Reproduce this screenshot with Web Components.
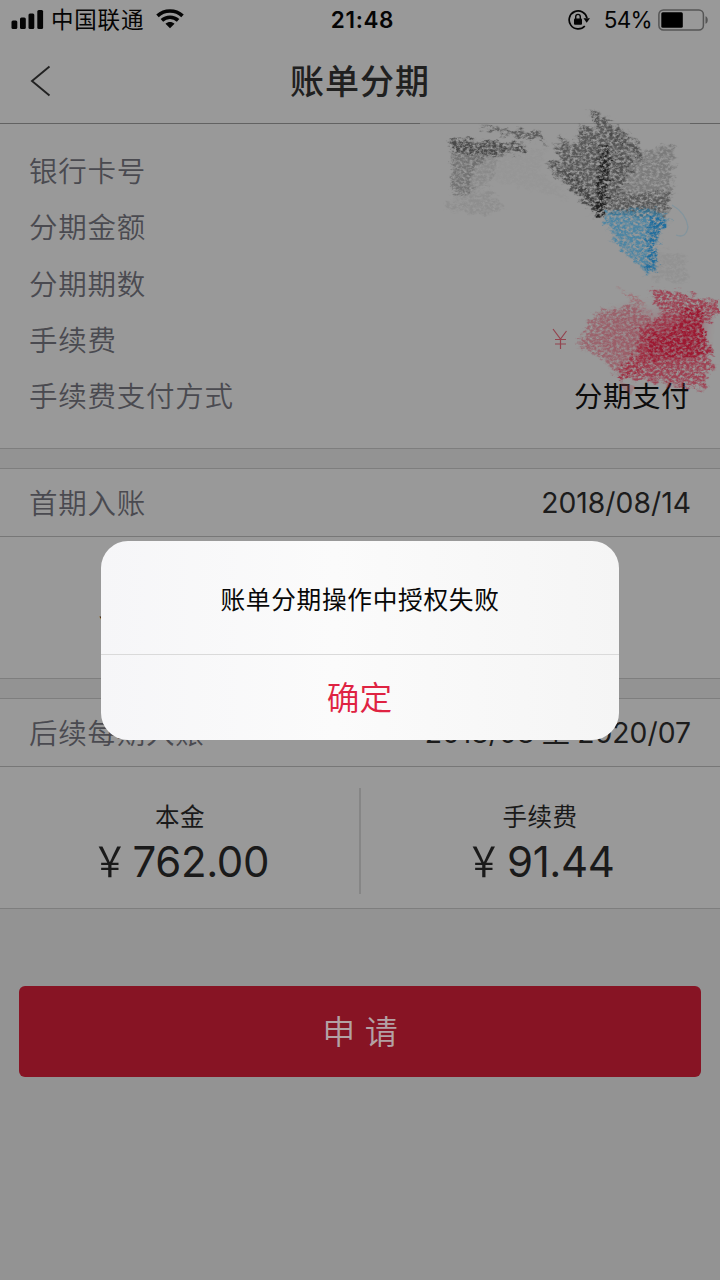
<!DOCTYPE html>
<html lang="zh-CN">
<head>
<meta charset="utf-8">
<title>账单分期</title>
<style>
html,body{margin:0;background:#939393}
body{width:720px;height:1280px;overflow:hidden;font-family:Inter,"Noto Sans CJK SC",sans-serif}
</style>
</head>
<body>
<app-screen>
  <status-bar></status-bar>
  <nav-bar>账单分期</nav-bar>
  <detail-card>
    <info-row label="银行卡号"></info-row>
    <info-row label="分期金额"></info-row>
    <info-row label="分期期数"></info-row>
    <info-row label="手续费"></info-row>
    <info-row label="手续费支付方式">分期支付</info-row>
    <crayon-marks slot="marks"></crayon-marks>
  </detail-card>
  <bill-section label="首期入账" when="2018/08/14">
    <amount-cell partial><span>￥</span></amount-cell>
    <amount-cell></amount-cell>
  </bill-section>
  <bill-section label="后续每期入账" when="2018/08 至 2020/07">
    <amount-cell label="本金"><span>￥</span>762.00</amount-cell>
    <amount-cell label="手续费"><span>￥</span>91.44</amount-cell>
  </bill-section>
  <apply-button>申 请</apply-button>
  <alert-dialog slot="dialog" action="确定">账单分期操作中授权失败</alert-dialog>
</app-screen>
<script>
function define(name, html, setup) {
  const t = document.createElement('template');
  t.innerHTML = html;
  customElements.define(name, class extends HTMLElement {
    constructor() {
      super();
      this.attachShadow({mode: 'open'}).appendChild(t.content.cloneNode(true));
    }
    connectedCallback() { if (setup) setup(this, this.shadowRoot); }
  });
}
const putLabel = (el, root) => {
  root.querySelector('.label').textContent = el.getAttribute('label') || '';
};

define('app-screen', `<style>
:host{display:flex;flex-direction:column;position:relative;width:720px;height:1280px;background:#939393;overflow:hidden}
</style><slot></slot><slot name="dialog"></slot>`);

define('status-bar', `<style>
:host{display:grid;grid-template-columns:1fr auto 1fr;align-items:center;height:40px;background:#999;color:#050505;font-size:22.5px;line-height:40px}
.l{display:flex;align-items:center;padding-left:11px}
.l span{font-size:22.5px;letter-spacing:.8px;margin:0 10px 0 7px}
.time{font-weight:600;font-size:22.5px;letter-spacing:.65px;padding-left:5px}
.r{display:flex;align-items:center;justify-content:flex-end;padding-right:11px}
.r span{margin:0 6px 0 13px;font-size:22.5px;letter-spacing:-.7px}
svg{display:block}
</style>
<div class="l">
<svg width="33" height="20" viewBox="0 0 33 20" fill="#050505"><rect x=".5" y="10.500" width="5.800" height="8.500" rx="1.500"/><rect x="9" y="7.500" width="5.800" height="11.500" rx="1.500"/><rect x="17.500" y="3.500" width="5.800" height="15.500" rx="1.500"/><rect x="26.300" y="0" width="5.800" height="19" rx="1.500"/></svg>
<span>中国联通</span>
<svg style="margin:-2px 0 0 2px" width="28" height="20" viewBox="0 0 28 20"><g fill="none" stroke="#050505" stroke-width="3.700"><path d="M1.500 6.800C8.500.4 19.500.4 26.500 6.800"/><path d="M5.900 11.400c4.600-4.200 11.600-4.200 16.200 0"/></g><path d="M9.500 14.700c2.600-2.300 6.400-2.300 9 0L14 19.200z" fill="#050505"/></svg>
</div>
<div class="time">21:48</div>
<div class="r">
<svg width="23" height="20" viewBox="0 0 23 20"><path d="M16.800 16A9 9 0 1 1 19 8.200" fill="none" stroke="#050505" stroke-width="1.700"/><path d="M15.500 8.200h6.500l-3.300 4.600z" fill="#050505"/><rect x="6" y="8.500" width="8" height="6.200" rx="1" fill="#050505"/><path d="M7.700 9V6.700a2.300 2.300 0 0 1 4.600 0V9" fill="none" stroke="#050505" stroke-width="1.400"/></svg>
<span>54%</span>
<svg width="51" height="22" viewBox="0 0 51 22"><rect x=".9" y=".9" width="44.500" height="20.200" rx="4.500" fill="none" stroke="#555" stroke-width="1.500"/><rect x="3.300" y="3.300" width="21.500" height="15.400" rx="1.500" fill="#000"/><path d="M47.500 7.200c3 1 3 6.600 0 7.600z" fill="#555"/></svg>
</div>`);

define('nav-bar', `<style>
:host{display:grid;grid-template-columns:80px 1fr 80px;align-items:center;height:83px;background:#999;border-bottom:1px solid #626262;color:#202020}
h1{margin:0;text-align:center;font-size:34px;font-weight:500;letter-spacing:1px;line-height:50px}
svg{display:block;margin:-1px 0 0 30px}
</style><svg width="22" height="32" viewBox="0 0 22 32"><path d="M19.500 1.500L2 16l17.500 14.500" fill="none" stroke="#222" stroke-width="1.900"/></svg><h1><slot></slot></h1>`);

define('detail-card', `<style>
:host{display:block;position:relative;box-sizing:border-box;height:325px;padding-top:17.300px;background:#999;border-bottom:1px solid #7e7e7e}
</style><slot></slot><slot name="marks"></slot>`);

define('info-row', `<style>
:host{display:flex;justify-content:space-between;align-items:center;height:56.300px;padding:0 30px 0 29px;font-size:28.500px;letter-spacing:.75px;color:#4a4a50}
.label{font-weight:350}
.v{color:#0c0c0c;letter-spacing:.5px}
</style><span class="label"></span><span class="v"><slot></slot></span>`, putLabel);

define('bill-section', `<style>
:host{display:block;margin-top:19px;height:211px;background:#999}
.head{display:flex;justify-content:space-between;align-items:center;height:67px;padding:0 29px;border-top:1px solid #7e7e7e;border-bottom:1px solid #777;font-size:28.500px;color:#4a4a50}
.label{letter-spacing:.75px;font-weight:350;padding-bottom:3px}
.when{color:#1c1c1c;font-size:28.300px;letter-spacing:.02px;word-spacing:-.8px;line-height:40px}
.cells{display:grid;grid-template-columns:1fr 1fr;height:141px;border-bottom:1px solid #7e7e7e;position:relative}
.cells::before{content:"";position:absolute;left:359px;top:21px;width:2px;height:106px;background:#868686}
</style><div class="head"><span class="label"></span><span class="when"></span></div><div class="cells"><slot></slot></div>`,
(el, root) => { putLabel(el, root); root.querySelector('.when').textContent = el.getAttribute('when'); });

define('amount-cell', `<style>
:host{display:flex;flex-direction:column;align-items:center;color:#1a1a1a;padding-top:32px}
.label{height:36px;line-height:36px;font-size:24.500px;font-weight:400;letter-spacing:.5px}
.value{height:52px;line-height:54px;font-size:42px;letter-spacing:-.4px;white-space:nowrap}
::slotted(span){display:inline-block;transform:scaleX(.85);margin:0 2px 0 -2px}
:host([partial]) ::slotted(span){transform:none;margin:0 135px 0 0}
</style><div class="label"></div><div class="value"><slot></slot></div>`, putLabel);

define('apply-button', `<style>
:host{display:block;margin:77px 19px 0;flex:none}
button{display:block;width:682px;height:91px;border:0;border-radius:6px;background:#871424;color:#b3a1a4;font:350 33px Inter,"Noto Sans CJK SC",sans-serif;padding:0 0 3px}
</style><button><slot></slot></button>`);

define('alert-dialog', `<style>
:host{position:absolute;left:101px;top:541px;width:518px;height:199px;display:grid;grid-template-rows:113px 1px 85px;border-radius:27px;overflow:hidden;background:linear-gradient(90deg,#f6f6f8,#fbfbfb 45%,#f5f5f5)}
.msg{display:grid;place-items:center;color:#080808;font-size:24.700px;letter-spacing:.68px;padding-top:1px}
.line{background:#dadada}
.ok{display:grid;place-items:center;color:#df2342;font-size:32.700px;font-weight:350;padding:0 1px 5px 0}
</style><div class="msg"><span><slot></slot></span></div><div class="line"></div><div class="ok"></div>`,
(el, root) => { root.querySelector('.ok').textContent = el.getAttribute('action'); });

define('crayon-marks', `<style>
:host{position:absolute;left:420px;top:-19px;width:300px;height:300px;pointer-events:none}
svg{display:block}
</style>
<svg width="300" height="300" viewBox="420 105 300 300">
<defs>
<filter id="g" filterUnits="userSpaceOnUse" x="420" y="105" width="300" height="300" color-interpolation-filters="sRGB">
<feTurbulence type="fractalNoise" baseFrequency=".12 .2" numOctaves="3" seed="3" result="w"/>
<feTurbulence type="fractalNoise" baseFrequency=".3 .38" numOctaves="3" seed="8" result="n"/>
<feGaussianBlur in="SourceGraphic" stdDeviation="1.300" result="b"/>
<feDisplacementMap in="b" in2="w" scale="15" xChannelSelector="R" yChannelSelector="G" result="d"/>
<feColorMatrix in="n" values="0 0 0 0 0  0 0 0 0 0  0 0 0 0 0  0 0 2.800 0 -.750" result="m"/>
<feComposite in="d" in2="m" operator="in"/>
<feGaussianBlur stdDeviation=".55"/>
</filter>
<filter id="s" x="-20%" y="-20%" width="140%" height="140%"><feGaussianBlur stdDeviation="6"/></filter>
</defs>
<rect x="420" y="122" width="270" height="3" fill="#999" opacity=".5"/>
<g filter="url(#g)">
<path d="M449 137L488 142 528 146 524 151 480 156 452 153Z" fill="#404040" opacity=".9"/>
<path d="M481 125L505 130 538 132 547 142 532 139 487 130Z" fill="#444" opacity=".75"/>
<path d="M452 155L490 154 472 172 470 194 452 198Z" fill="#505050" opacity=".5"/>
<path d="M470 158L500 154 490 182 468 198Z" fill="#606060" opacity=".25"/>
<path d="M445 204L490 190 505 210 480 215 447 208Z" fill="#606060" opacity=".18"/>
<path d="M500 156L550 146 538 170 570 200 530 188 490 180Z" fill="#777" opacity=".08"/>
<path d="M556 150L561 136 575 144 580 126 600 129 622 138 634 165 622 185 612 208 600 215 590 206 572 180Z" fill="#3e3e3e" opacity=".72"/>
<path d="M547 165L560 162 600 205 601 216 592 212Z" fill="#383838" opacity=".75"/>
<path d="M588 109L604 117 638 143 645 163 624 147 601 129Z" fill="#3c3c3c" opacity=".75"/>
<path d="M601 145L609 148 608 180 604 215 594 216Z" fill="#202020"/>
<path d="M618 157L645 152 674 144 672 198 664 213 612 214Z" fill="#454545" opacity=".36"/>
<path d="M616 195L670 192 666 216 615 216Z" fill="#383838" opacity=".5"/>
<path d="M603 212L650 208 672 219 658 236 656 270 648 273 632 258 612 238Z" fill="#2a7ca8" opacity=".68"/>
<path d="M650 214L667 221 656 240 655 272 647 270 648 242Z" fill="#16699c" opacity=".85"/>
<path d="M658 250L686 255 686 283 654 280Z" fill="#6a6a6a" opacity=".15"/>
</g>
<path d="M672 205q14 8 16 22-2 12-12 8" fill="none" stroke="#5a8ba5" stroke-width="1.300" opacity=".35"/>
<g filter="url(#s)" opacity=".4">
<path d="M640 330L674 315 704 314 700 358 642 362Z" fill="#9a1530"/>
<path d="M603 320L635 308 690 310 690 372 630 370 600 345Z" fill="#a13d4e" opacity=".35"/>
</g>
<g filter="url(#g)">
<path d="M577 345L595 313 633 304 655 320 648 366 624 380 592 352Z" fill="#9c3042" opacity=".5"/>
<path d="M618 288L637 298 650 312 634 303Z" fill="#a8414e" opacity=".45"/>
<path d="M651 289L680 293 722 302 722 314 704 322 702 350 717 368 706 372 705 389 665 383 620 378 621 368 641 345 639 328 665 313 654 303Z" fill="#a01e36" opacity=".7"/>
<path d="M645 338L675 327 684 308 702 310 703 332 712 354 650 360Z" fill="#9c142e" opacity=".85"/>
</g>
<path d="M620 382l15 4-4 9-9-7z" fill="#a34b5b" opacity=".3"/>
<path d="M553 329l7.500 10 6-8M560.500 339v10M555 339.500h11M555 344h11" fill="none" stroke="#93434e" stroke-width="1.200"/>
</svg>`);
</script>
</body>
</html>
